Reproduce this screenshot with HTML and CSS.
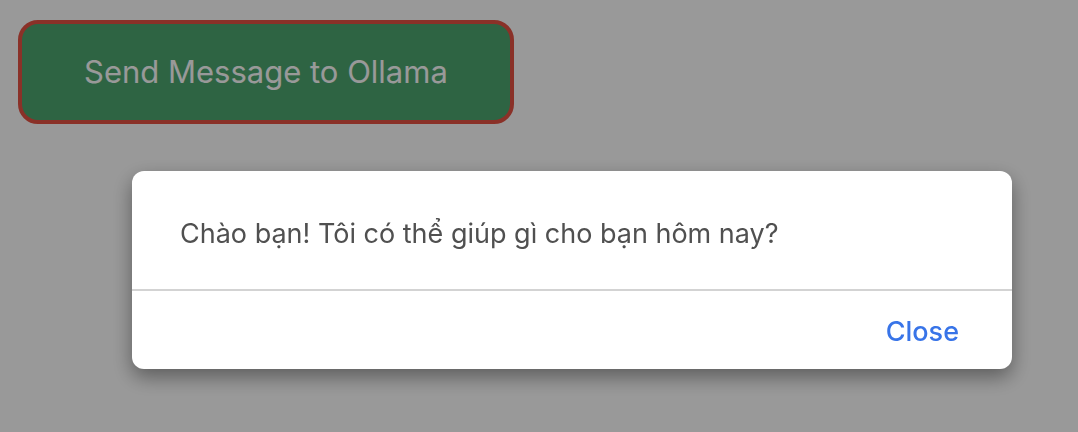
FILE: index.html
```html
<!DOCTYPE html>
<html lang="vi">
<head>
<meta charset="utf-8">
<meta name="viewport" content="width=device-width, initial-scale=1">
<title>Ollama</title>
<link rel="stylesheet" href="styles.css">
</head>
<body>
<main class="page">
<button class="send-button" type="button">Send Message to Ollama</button>
</main>
<div class="overlay">
<div class="dialog" role="dialog" aria-modal="true" aria-describedby="reply">
<p class="dialog-message" id="reply">Chào bạn! Tôi có thể giúp gì cho bạn hôm nay?</p>
<div class="dialog-actions">
<button class="close-button" type="button">Close</button>
</div>
</div>
</div>
</body>
</html>
```

FILE: styles.css
```css
* {
  box-sizing: border-box;
}

body {
  margin: 0;
  min-height: 100vh;
  background: #fff;
  font-family: Inter, "Liberation Sans", sans-serif;
}

.page {
  padding: 20px 18px;
}

.send-button {
  padding: 28px 62px;
  border: 4px solid #e65344;
  border-radius: 20px;
  background: #4da771;
  color: #fff;
  font: 400 31px/40px Inter, "Liberation Sans", sans-serif;
}

.overlay {
  position: fixed;
  inset: 0;
  padding: 171px 66px 0 132px;
  background: rgba(0, 0, 0, 0.4);
}

.dialog {
  border-radius: 12px;
  background: #fff;
  box-shadow: 0 8px 20px rgba(0, 0, 0, 0.4);
}

.dialog-message {
  margin: 0;
  padding: 45px 48px 37px;
  border-bottom: 2px solid #d3d3d3;
  color: #505050;
  font-size: 27px;
  line-height: 36px;
}

.dialog-actions {
  display: flex;
  justify-content: flex-end;
  padding: 17px 41px 13px;
}

.close-button {
  padding: 6px 12px;
  border: 0;
  background: none;
  color: #3874e8;
  font: 500 27px/36px Inter, "Liberation Sans", sans-serif;
}
```
